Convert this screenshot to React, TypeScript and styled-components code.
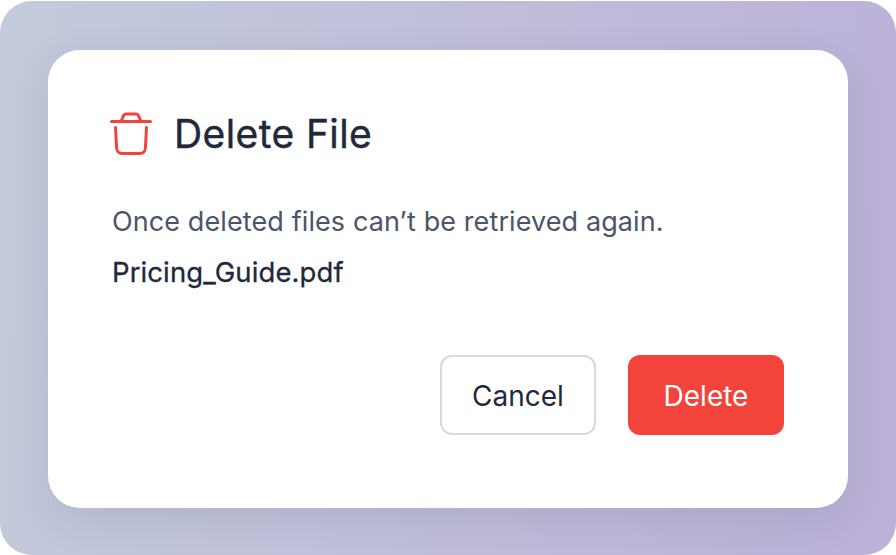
import React from 'react'
import styled, { createGlobalStyle } from 'styled-components'

const GlobalStyle = createGlobalStyle`
  html, body {
    margin: 0;
    padding: 0;
    background: #fff;
    font-family: Inter, "Liberation Sans", sans-serif;
  }
`

const TrashIcon = () => (
  <svg width="42" height="44" viewBox="0 0 42 44" fill="none" stroke="#f2443a" strokeWidth="3" strokeLinecap="round" strokeLinejoin="round">
    <path d="M1.5 9.5H40.5" />
    <path d="M11 9.5L13.5 3.6C13.9 2.6 14.7 2 15.8 2H26.2C27.3 2 28.1 2.6 28.5 3.6L31 9.5" />
    <path d="M5.5 15.5L6.6 36C6.8 39.2 9 41.5 12 41.5H30C33 41.5 35.2 39.2 35.4 36L36.5 15.5" />
  </svg>
)

export default function App() {
  return (
    <>
      <GlobalStyle />
      <Backdrop>
        <Dialog>
          <Header>
            <IconSlot>
              <TrashIcon />
            </IconSlot>
            <Title>Delete File</Title>
          </Header>
          <Message>Once deleted files can’t be retrieved again.</Message>
          <FileName>Pricing_Guide.pdf</FileName>
          <Actions>
            <Button>Cancel</Button>
            <Button $danger>Delete</Button>
          </Actions>
        </Dialog>
      </Backdrop>
    </>
  )
}

const Backdrop = styled.div`
  box-sizing: border-box;
  width: 896px;
  height: 554px;
  margin-top: 1px;
  padding: 49px 48px 47px;
  border-radius: 32px;
  overflow: hidden;
  background: linear-gradient(95deg, #c3cbdc 0%, #bcb1d8 100%);
`

const Dialog = styled.div`
  box-sizing: border-box;
  height: 458px;
  padding: 60px 64px 0;
  border-radius: 32px;
  background: #fff;
  box-shadow: 0 12px 40px rgb(30 41 59 / 10%);
`

const Header = styled.div`
  display: flex;
  align-items: center;
  gap: 22px;
  height: 48px;
`

const IconSlot = styled.div`
  display: flex;
  margin-left: -2px;
`

const Title = styled.h1`
  margin: 0;
  font-size: 39px;
  line-height: 46px;
  font-weight: 400;
  letter-spacing: 0.4px;
  -webkit-text-stroke: 0.4px #1e293b;
  color: #1e293b;
`

const Message = styled.p`
  margin: 48px 0 0;
  font-size: 27px;
  line-height: 32px;
  font-weight: 400;
  letter-spacing: 0.1px;
  color: #4a5568;
`

const FileName = styled.p`
  margin: 18px 0 0;
  font-size: 27.5px;
  line-height: 32px;
  font-weight: 400;
  letter-spacing: 0.1px;
  -webkit-text-stroke: 0.3px #1e293b;
  color: #1e293b;
`

const Actions = styled.div`
  display: flex;
  justify-content: flex-end;
  gap: 32px;
  margin-top: 67px;
`

const Button = styled.button<{ $danger?: boolean }>`
  box-sizing: border-box;
  width: 156px;
  height: 80px;
  padding-top: 2px;
  border-radius: 12px;
  border: ${({ $danger }) => ($danger ? 'none' : '2px solid #d5d9e4')};
  background: ${({ $danger }) => ($danger ? '#f2443a' : '#fff')};
  color: ${({ $danger }) => ($danger ? '#fff' : '#1e293b')};
  font-family: Inter, "Liberation Sans", sans-serif;
  font-size: 28px;
  font-weight: 400;
`
